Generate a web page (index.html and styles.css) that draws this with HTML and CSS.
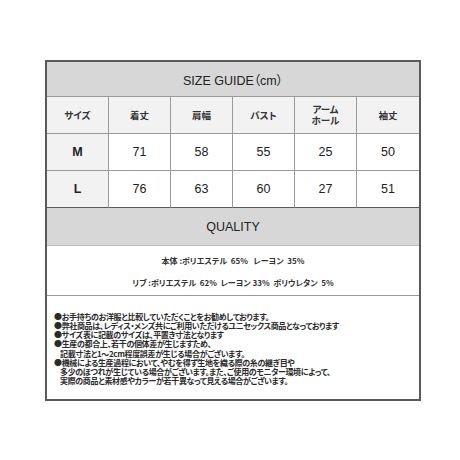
FILE: index.html
```html
<!DOCTYPE html>
<html lang="ja">
<head>
<meta charset="utf-8">
<title>SIZE GUIDE</title>
<link rel="stylesheet" href="styles.css">
</head>
<body>
<div class="sheet">
  <div class="title">SIZE GUIDE（cm）</div>
  <div class="size-grid">
    <div class="cell label">サイズ</div>
    <div class="cell label">着丈</div>
    <div class="cell label">肩幅</div>
    <div class="cell label">バスト</div>
    <div class="cell label two"><span>アーム</span><span>ホール</span></div>
    <div class="cell label">袖丈</div>

    <div class="cell size">M</div>
    <div class="cell num">71</div>
    <div class="cell num">58</div>
    <div class="cell num">55</div>
    <div class="cell num">25</div>
    <div class="cell num">50</div>

    <div class="cell size end">L</div>
    <div class="cell num end">76</div>
    <div class="cell num end">63</div>
    <div class="cell num end">60</div>
    <div class="cell num end">27</div>
    <div class="cell num end">51</div>
  </div>
  <div class="quality-title">QUALITY</div>
  <div class="quality-body">
    <p>本体 :ポリエステル&nbsp;&nbsp;65%&nbsp;&nbsp;&nbsp;レーヨン&nbsp;&nbsp;35%</p>
    <p>リブ :ポリエステル&nbsp;&nbsp;62%&nbsp;&nbsp;レーヨン 33%&nbsp;&nbsp;ポリウレタン&nbsp;&nbsp;5%</p>
  </div>
  <div class="notes">
    <p>●お手持ちのお洋服と比較していただくことをお勧めしております。</p>
    <p>●弊社商品は、レディス・メンズ共にご利用いただけるユニセックス商品となっております</p>
    <p>●サイズ表に記載のサイズは、平置き寸法となります</p>
    <p>●生産の都合上、若干の個体差が生じますため、</p>
    <p class="indent">記載寸法と1～2cm程度誤差が生じる場合がございます。</p>
    <p>●機械による生産過程において、やむを得ず生地を織る際の糸の継ぎ目や</p>
    <p class="indent">多少のほつれが生じている場合がございます。また、ご使用のモニター環境によって、</p>
    <p class="indent">実際の商品と素材感やカラーが若干異なって見える場合がございます。</p>
  </div>
</div>
</body>
</html>
```

FILE: styles.css
```css
html, body {
  margin: 0;
  padding: 0;
  background: #ffffff;
}

body {
  font-family: "Liberation Sans", "Noto Sans CJK JP", sans-serif;
  color: #222222;
}

.sheet {
  box-sizing: border-box;
  width: 376px;
  margin: 60px 0 0 45px;
  border: 2px solid #5a5a5a;
}

.title {
  height: 34px;
  border-bottom: 1px solid #9a9a9a;
  background: #d7d7d7;
  display: flex;
  align-items: center;
  justify-content: center;
  font-size: 12.5px;
  font-feature-settings: "palt";
}

.size-grid {
  display: grid;
  grid-template-columns: repeat(6, 1fr);
  grid-auto-rows: 37px;
}

.cell {
  box-sizing: border-box;
  display: flex;
  align-items: center;
  justify-content: center;
  text-align: center;
  border-right: 1px solid #9a9a9a;
  border-bottom: 1px solid #9a9a9a;
}

.cell:nth-child(6n) {
  border-right: none;
}

.cell.end {
  border-bottom: 1.5px solid #5a5a5a;
}

.label {
  background: #f2f2f2;
  font-family: "Noto Sans CJK JP", sans-serif;
  font-weight: 700;
  font-size: 9.5px;
  font-feature-settings: "palt";
  color: #333333;
}

.label.two {
  flex-direction: column;
  gap: 0;
}

.label.two span {
  display: block;
  line-height: 11px;
  height: 11px;
}

.size {
  background: #f2f2f2;
  font-weight: 700;
  font-size: 12.5px;
}

.num {
  font-size: 12.5px;
}

.quality-title {
  height: 37px;
  border-bottom: 1px solid #bdbdbd;
  background: #d7d7d7;
  display: flex;
  align-items: center;
  justify-content: center;
  font-size: 12.5px;
}

.quality-body {
  height: 50px;
  border-bottom: 1px solid #9a9a9a;
  display: flex;
  flex-direction: column;
  align-items: center;
  justify-content: center;
  gap: 10px;
  padding-top: 2px;
  box-sizing: border-box;
  font-family: "Noto Sans CJK JP", sans-serif;
  font-size: 8px;
  font-weight: 700;
  font-feature-settings: "palt";
  color: #333333;
}

.quality-body p {
  margin: 0;
  line-height: 12px;
}

.notes {
  padding: 16px 0 14px 7px;
  font-family: "Noto Sans CJK JP", sans-serif;
  font-size: 8px;
  font-weight: 700;
  letter-spacing: -0.35px;
  font-feature-settings: "palt";
  color: #2a2a2a;
}

.notes p {
  margin: 0;
  line-height: 9.15px;
  white-space: nowrap;
}

.notes .indent {
  padding-left: 6px;
}
```
